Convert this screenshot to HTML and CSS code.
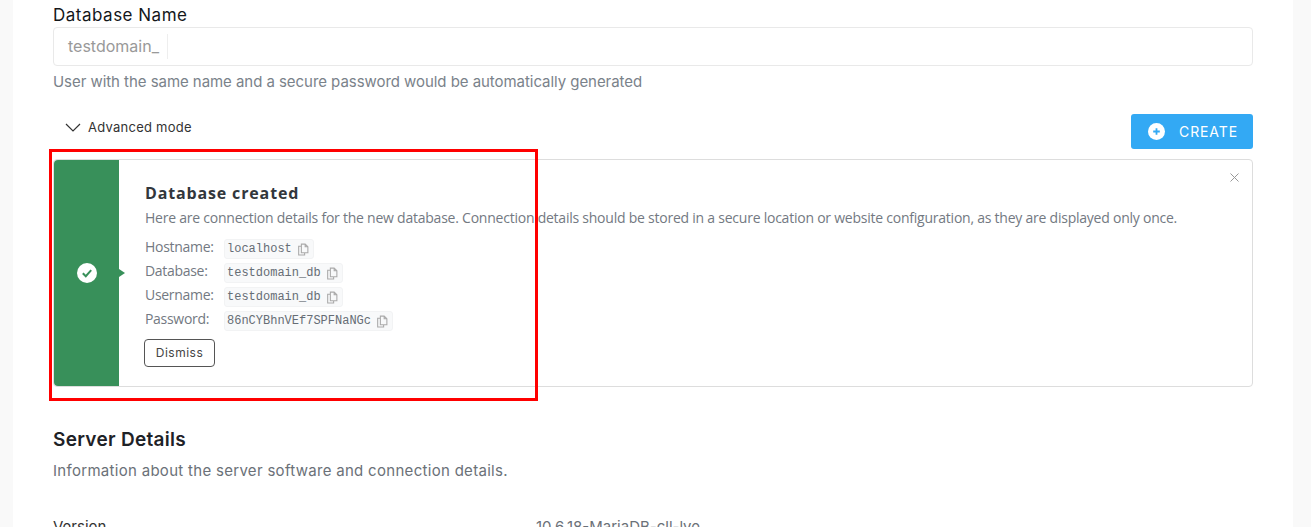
FILE: index.html
```html
<!DOCTYPE html>
<html lang="en">
<head>
<meta charset="utf-8">
<title>Database</title>
<link rel="stylesheet" href="styles.css">
</head>
<body>
<main class="panel">
  <label class="field-label">Database Name</label>
  <div class="input">
    <span class="prefix">testdomain_</span>
  </div>
  <p class="help">User with the same name and a secure password would be automatically generated</p>
  <div class="actions">
    <div class="advanced">
      <svg class="chevron" width="16" height="9" viewBox="0 0 16 9"><path d="M1 1l7 7 7-7" fill="none" stroke="#333" stroke-width="1.2"/></svg>
      <span>Advanced mode</span>
    </div>
    <button class="create">
      <svg width="17" height="17" viewBox="0 0 17 17"><circle cx="8.5" cy="8.5" r="8.5" fill="#fff"/><path d="M8.5 5.2v6.6M5.2 8.5h6.6" stroke="#33a9f4" stroke-width="1.8"/></svg>
      <span>CREATE</span>
    </button>
  </div>
  <section class="notice">
    <div class="status">
      <svg width="20" height="20" viewBox="0 0 20 20"><circle cx="10" cy="10" r="10" fill="#fff"/><path d="M5.8 10.2l3 3 5.4-6" fill="none" stroke="#38905a" stroke-width="2"/></svg>
    </div>
    <div class="notice-body">
      <h3>Database created</h3>
      <p class="notice-text">Here are connection details for the new database. Connection details should be stored in a secure location or website configuration, as they are displayed only once.</p>
      <dl class="creds">
        <dt>Hostname:</dt>
        <dd><code>localhost<svg class="copy" viewBox="0 0 11 12"><path d="M4 1h3.500L10 3.500V9H4zM7.500 1v2.500H10M4 3H1.500v8H7V9" fill="none" stroke="#aaa" stroke-width="1"/></svg></code></dd>
        <dt>Database:</dt>
        <dd><code>testdomain_db<svg class="copy" viewBox="0 0 11 12"><path d="M4 1h3.500L10 3.500V9H4zM7.500 1v2.500H10M4 3H1.500v8H7V9" fill="none" stroke="#aaa" stroke-width="1"/></svg></code></dd>
        <dt>Username:</dt>
        <dd><code>testdomain_db<svg class="copy" viewBox="0 0 11 12"><path d="M4 1h3.500L10 3.500V9H4zM7.500 1v2.500H10M4 3H1.500v8H7V9" fill="none" stroke="#aaa" stroke-width="1"/></svg></code></dd>
        <dt>Password:</dt>
        <dd><code>86nCYBhnVEf7SPFNaNGc<svg class="copy" viewBox="0 0 11 12"><path d="M4 1h3.500L10 3.500V9H4zM7.500 1v2.500H10M4 3H1.500v8H7V9" fill="none" stroke="#aaa" stroke-width="1"/></svg></code></dd>
      </dl>
      <button class="dismiss">Dismiss</button>
    </div>
    <svg class="close" width="9" height="9" viewBox="0 0 9 9"><path d="M.5.5l8 8M8.500.5l-8 8" stroke="#999" stroke-width="1"/></svg>
    <div class="highlight"></div>
  </section>
  <h2 class="section-title">Server Details</h2>
  <p class="section-sub">Information about the server software and connection details.</p>
  <div class="row"><span class="row-key">Version</span><span class="row-val">10.6.18-MariaDB-cll-lve</span></div>
</main>
</body>
</html>
```
FILE: styles.css
```css
* { box-sizing: border-box; }
html, body { height: 100%; }
body {
  margin: 0;
  background: #f9f9f9;
  font-family: "Open Sans", "Noto Sans", sans-serif;
  overflow: hidden;
  height: 527px;
}
.panel {
  margin: 0 18px 0 13px;
  height: 527px;
  background: #fff;
  padding: 5px 40px 0;
  overflow: hidden;
}
.field-label {
  display: block;
  font: 400 17px/20px Inter, sans-serif;
  letter-spacing: .5px;
  color: #14171a;
}
.input {
  margin-top: 2px;
  height: 39px;
  border: 1px solid #e9e9e9;
  border-radius: 4px;
  padding: 6px 0 6px 14px;
  display: flex;
}
.prefix {
  font: 400 16px/24px Inter, sans-serif;
  color: #999;
  padding-right: 8px;
  border-right: 1px solid #eee;
}
.help {
  margin: 7px 0 0;
  font: 400 15px/18px Inter, sans-serif;
  letter-spacing: -.05px;
  color: #7a828a;
}
.actions {
  display: flex;
  justify-content: space-between;
  margin-top: 23px;
  height: 45px;
}
.advanced {
  display: flex;
  align-items: center;
  gap: 7px;
  height: 20px;
  margin: 3px 0 0 12px;
  font: 400 13px/19px Inter, sans-serif;
  letter-spacing: .25px;
  color: #333;
}
.create {
  align-self: flex-start;
  width: 122px;
  height: 35px;
  background: #33a9f4;
  border: 0;
  border-radius: 3px;
  color: #fff;
  font: 400 14px/35px Inter, sans-serif;
  letter-spacing: .9px;
  display: flex;
  align-items: center;
  padding: 0 0 0 17px;
  gap: 14px;
}
.notice {
  position: relative;
  display: flex;
  height: 228px;
  border: 1px solid #ddd;
  border-radius: 4px;
}
.status {
  position: relative;
  width: 65px;
  background: #38905a;
  border-radius: 4px 0 0 4px;
  display: flex;
  align-items: center;
  justify-content: center;
  flex: none;
}
.status::after {
  content: "";
  position: absolute;
  right: -6px;
  top: 50%;
  margin-top: -4px;
  border-left: 6px solid #38905a;
  border-top: 4px solid transparent;
  border-bottom: 4px solid transparent;
}
.notice-body { padding: 23px 0 0 26px; }
.notice-body h3 {
  margin: 0;
  font: 700 16px/20px "Open Sans", sans-serif;
  letter-spacing: .85px;
  color: #32373c;
}
.notice-text {
  margin: 5px 0 0;
  font: 400 14px/20px "Open Sans", sans-serif;
  letter-spacing: -.235px;
  color: #737982;
  white-space: nowrap;
}
.creds {
  margin: 9px 0 0;
  display: grid;
  grid-template-columns: 79px auto;
  grid-auto-rows: 24px;
  justify-content: start;
  font-size: 14px;
  letter-spacing: -.3px;
  color: #737982;
}
.creds dt { line-height: 20px; }
.creds dd { margin: 0; }
.creds dd code {
  display: inline-flex;
  align-items: center;
  height: 20px;
  padding: 0 4px 0 2px;
  background: #f8f9fa;
  border: 1px solid #f2f3f4;
  border-radius: 3px;
  font: 12px/18px "Liberation Mono", monospace;
  letter-spacing: 0;
  color: #666d75;
  gap: 5px;
}
.copy { width: 12px; height: 13px; flex: none; }
.dismiss {
  display: block;
  margin: 6px 0 0 -1px;
  width: 71px;
  height: 28px;
  background: #fff;
  border: 1px solid #555;
  border-radius: 4px;
  font: 400 12px/25px Inter, sans-serif;
  letter-spacing: .5px;
  color: #444;
  padding: 0 0 1px;
}
.close { position: absolute; top: 13px; right: 13px; }
.highlight {
  position: absolute;
  left: -5px;
  top: -11px;
  width: 489px;
  height: 252px;
  border: 3px solid #f00;
  pointer-events: none;
}
.section-title {
  margin: 41px 0 0;
  font: 600 19px/24px Inter, sans-serif;
  letter-spacing: .3px;
  color: #1e2227;
}
.section-sub {
  margin: 9px 0 0;
  font: 400 15px/20px Inter, sans-serif;
  letter-spacing: .3px;
  color: #6b7178;
}
.row {
  display: flex;
  margin-top: 36px;
  font: 400 15px/20px Inter, sans-serif;
  color: #333;
}
.row-key { width: 483px; }
.row-val { color: #6b7178; }
```
